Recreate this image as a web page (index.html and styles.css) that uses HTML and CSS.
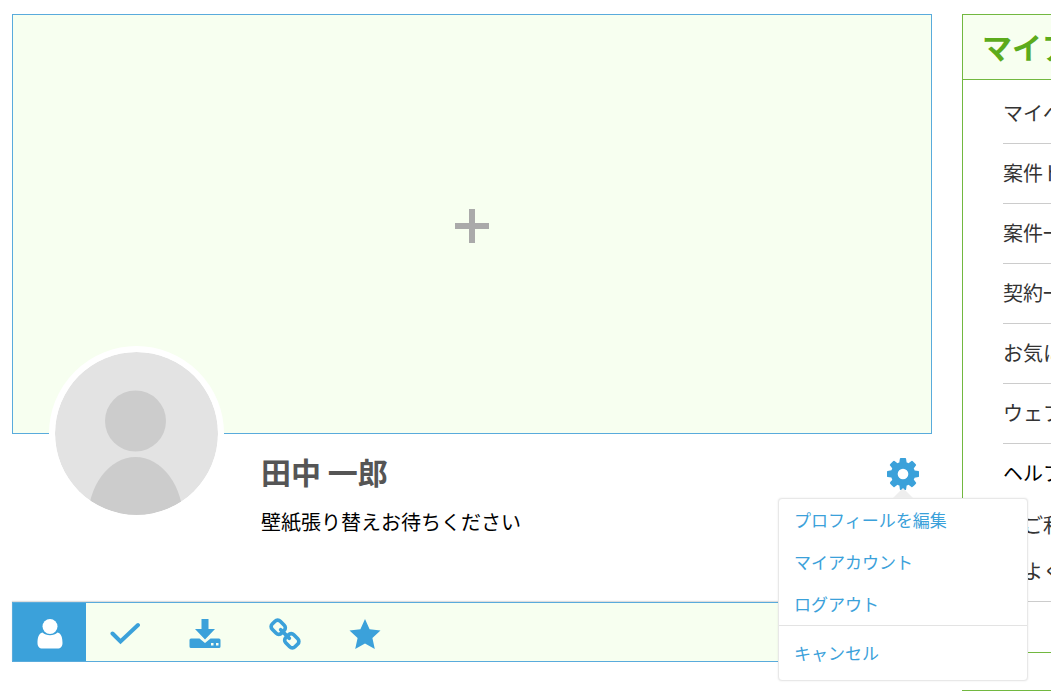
FILE: index.html
```html
<!DOCTYPE html>
<html lang="ja">
  <head>
    <meta charset="UTF-8" />
    <meta name="viewport" content="width=device-width, initial-scale=1.0" />
    <title>マイページ</title>
    <link rel="stylesheet" href="styles.css">
  </head>
  <body>
    <div class="page">
      <main class="main-content">
        <button class="cover" type="button" aria-label="壁紙を追加">
          <svg class="cover-plus" viewBox="0 0 34 34"><path d="M14 0h6v14h14v6H20v14h-6V20H0v-6h14z" /></svg>
        </button>
        <section class="profile">
          <svg class="avatar" viewBox="0 0 163 163">
            <defs>
              <clipPath id="avatar-clip"><circle cx="81.5" cy="81.5" r="81.5" /></clipPath>
            </defs>
            <g clip-path="url(#avatar-clip)">
              <rect class="avatar-bg" width="163" height="163" />
              <circle class="avatar-body" cx="80.5" cy="69" r="30.5" />
              <ellipse class="avatar-body" cx="80.5" cy="170" rx="48" ry="65" />
            </g>
          </svg>
          <div class="profile-text">
            <h1>田中 一郎</h1>
            <p>壁紙張り替えお待ちください</p>
          </div>
          <div class="settings">
            <button class="settings-button" type="button" aria-label="設定">
              <svg viewBox="0 0 1536 1536"><path d="M1024 768q0-106-75-181t-181-75-181 75-75 181 75 181 181 75 181-75 75-181zm512-109v222q0 12-8 23t-20 13l-185 28q-19 54-39 91 35 50 107 138 10 12 10 25t-9 23q-27 37-99 108t-94 71q-12 0-26-9l-138-108q-44 23-91 38-16 136-29 186-7 28-36 28H657q-14 0-24.500-8.500T621 1506l-28-184q-49-16-90-37l-141 107q-10 9-25 9-14 0-25-11-126-114-165-168-7-10-7-23 0-12 8-23 15-21 51-66.500t54-70.500q-27-50-41-99l-183-27q-13-2-21-12.500T0 877V655q0-12 8-23t19-13l186-28q14-46 39-92-40-57-107-138-10-12-10-24 0-10 9-23 26-36 98.500-107.500T337 135q13 0 26 10l138 107q44-23 91-38 16-136 29-186 7-28 36-28h222q14 0 24.500 8.500T915 30l28 184q49 16 90 37l142-107q9-9 24-9 13 0 25 10 129 119 165 170 7 8 7 22 0 12-8 23-15 21-51 66.500t-54 70.500q26 50 41 98l183 28q13 2 21 12.500t8 23.500z" /></svg>
            </button>
            <nav class="menu">
              <a href="#">プロフィールを編集</a>
              <a href="#">マイアカウント</a>
              <a href="#">ログアウト</a>
              <a class="menu-cancel" href="#">キャンセル</a>
            </nav>
          </div>
        </section>
        <nav class="tabs">
          <a class="tab active" href="#" aria-label="プロフィール">
            <svg width="26" height="30" viewBox="0 0 26 30"><circle cx="13" cy="7.500" r="7.500" /><path d="M5.500 13.500C1.500 14.500.5 19 .5 24c0 3.500 1.800 5.500 5 5.500h15c3.200 0 5-2 5-5.500 0-5-1-9.500-5-10.500-2 1.800-4.500 2.800-7.500 2.800s-5.500-1-7.500-2.800z" /></svg>
          </a>
          <a class="tab" href="#" aria-label="完了">
            <svg width="30" height="30" viewBox="0 0 30 30"><path class="stroke" d="M2.500 14.500l8 8L28 6" /></svg>
          </a>
          <a class="tab" href="#" aria-label="ダウンロード">
            <svg width="32" height="30" viewBox="0 0 32 30"><path fill-rule="evenodd" d="M12.500 0h7v10H26L16 20.500 6 10h6.500zM2 19.500h8.500L16 24l5.500-4.500H30q1.500 0 1.500 1.500v6.500q0 1.500-1.500 1.500H2q-1.500 0-1.500-1.500V21q0-1.500 1.500-1.500zm20 4.500v2.500h2.500V24zm5 0v2.500h2.500V24z" /></svg>
          </a>
          <a class="tab" href="#" aria-label="リンク">
            <svg width="32" height="32" viewBox="0 0 1664 1664"><path d="M1456 1216q0-40-28-68l-208-208q-28-28-68-28-42 0-72 32 3 3 19 18.500t21.500 21.500 15 19 13 25.500 3.500 27.500q0 40-28 68t-68 28q-15 0-27.500-3.500t-25.500-13-19-15-21.500-21.500-18.500-19q-33 31-33 73 0 40 28 68l206 207q27 27 68 27 40 0 68-26l147-146q28-28 28-67zM753 511q0-40-28-68L519 236q-28-28-68-28-39 0-68 27L236 381q-28 28-28 67 0 40 28 68l208 208q27 27 68 27 42 0 72-31-3-3-19-18.500t-21.500-21.500-15-19-13-25.500T512 608q0-40 28-68t68-28q15 0 27.500 3.500t25.500 13 19 15 21.500 21.500 18.500 19q33-31 33-73zm895 705q0 120-85 203l-147 146q-83 83-203 83-121 0-204-85l-206-207q-83-83-83-203 0-123 88-209l-88-88q-86 88-208 88-120 0-204-84L100 652q-84-84-84-204t85-203L248 99q83-83 203-83 121 0 204 85l206 207q83 83 83 203 0 123-88 209l88 88q86-88 208-88 120 0 204 84l208 208q84 84 84 204z" /></svg>
          </a>
          <a class="tab" href="#" aria-label="お気に入り">
            <svg width="32" height="32" viewBox="0 0 32 32"><path d="M16 1l4.600 10.300L31.500 12.500l-8.100 7.500 2.400 11L16 25.500 6.200 31l2.400-11L.5 12.500l10.900-1.200z" /></svg>
          </a>
        </nav>
      </main>
      <aside class="sidebar">
        <section class="panel">
          <h2>マイアカウント</h2>
          <ul class="panel-list">
            <li><a href="#">マイページ</a></li>
            <li><a href="#">案件ドラフト</a></li>
            <li><a href="#">案件一覧</a></li>
            <li><a href="#">契約一覧</a></li>
            <li><a href="#">お気に入り</a></li>
            <li><a href="#">ウェブメール</a></li>
            <li class="help">
              ヘルプ
              <ul class="help-list">
                <li><a href="#">ご利用ガイド</a></li>
                <li><a href="#">よくある質問</a></li>
              </ul>
            </li>
          </ul>
        </section>
        <section class="panel panel-next"></section>
      </aside>
    </div>
  </body>
</html>
```
FILE: styles.css
```css
* {
  margin: 0;
  padding: 0;
  box-sizing: border-box;
}
body {
  font-family: "Noto Sans CJK JP", sans-serif;
  font-size: 20px;
  line-height: 30px;
  color: #000;
  background: #fff;
  overflow: hidden;
}
a {
  color: #3ba1da;
  text-decoration: none;
}
ul {
  list-style: none;
}
svg {
  display: block;
  fill: currentColor;
}
.page {
  display: flex;
  gap: 30px;
  min-width: 1290px;
  padding: 14px 12px;
}
.main-content {
  flex: 1;
}
.cover {
  display: flex;
  align-items: center;
  justify-content: center;
  width: 100%;
  height: 420px;
  padding-top: 3px;
  border: 1px solid #59abdc;
  background: #f7fff0;
  color: #aaa;
  cursor: pointer;
}
.cover-plus {
  width: 34px;
  height: 34px;
}
.profile {
  display: flex;
  align-items: flex-start;
  height: 168px;
  padding: 0 12px 0 37px;
}
.avatar {
  position: relative;
  width: 175px;
  height: 175px;
  margin-top: -88px;
  border: 6px solid #fff;
  border-radius: 50%;
  background: #fff;
}
.avatar-bg {
  fill: #e3e3e3;
}
.avatar-body {
  fill: #ccc;
}
.profile-text {
  flex: 1;
  padding: 15px 0 0 37px;
}
.profile-text h1 {
  margin-bottom: 14px;
  font-size: 30px;
  line-height: 44px;
  color: #555;
}
.settings {
  position: relative;
  padding-top: 24px;
}
.settings-button {
  display: block;
  width: 34px;
  height: 32px;
  border: none;
  background: none;
  color: #3ba1da;
  cursor: pointer;
}
.settings-button svg {
  width: 100%;
  height: 100%;
}
.menu {
  position: absolute;
  top: 64px;
  right: -108px;
  z-index: 10;
  width: 250px;
  padding-bottom: 6px;
  border: 1px solid #e8e8e8;
  border-radius: 4px;
  background: #fff;
  box-shadow: 0 0 2px rgba(0, 0, 0, 0.1);
}
.menu::before {
  content: "";
  position: absolute;
  top: -11px;
  left: 114px;
  border: 10px solid transparent;
  border-top: none;
  border-bottom-color: #eee;
}
.menu a {
  display: block;
  padding: 0 15px;
  font-size: 17px;
  line-height: 42px;
}
.menu .menu-cancel {
  padding-top: 6px;
  border-top: 1px solid #e3e3e3;
}
.tabs {
  display: flex;
  height: 60px;
  border: 1px solid #59abdc;
  background: #f7fff0;
  box-shadow: 0 -1px 1px #ddd;
}
.tab {
  display: flex;
  align-items: center;
  justify-content: center;
  width: 80px;
  padding: 3px 3px 0 0;
}
.tab.active {
  width: 73px;
  padding-right: 0;
  background: #3ba1da;
  color: #fff;
}
.stroke {
  fill: none;
  stroke: currentColor;
  stroke-width: 4;
  stroke-linecap: round;
}
.sidebar {
  width: 316px;
}
.panel {
  margin-bottom: 37px;
  border: 1px solid #72b840;
}
.panel h2 {
  padding: 9px 19px 11px;
  border-bottom: 1px solid #72b840;
  background: #f7fff0;
  font-size: 30px;
  line-height: 44px;
  color: #5cab1c;
}
.panel-list {
  padding: 4px 20px 50px 40px;
}
.panel-list > li {
  padding: 14px 0 15px;
  border-bottom: 1px solid #ccc;
}
.panel-list a {
  color: #333;
}
.panel-list .help {
  padding-bottom: 7px;
}
.help-list {
  padding: 14px 0 0 20px;
}
.help-list li {
  line-height: 46px;
}
.panel-next {
  height: 100px;
}
```
